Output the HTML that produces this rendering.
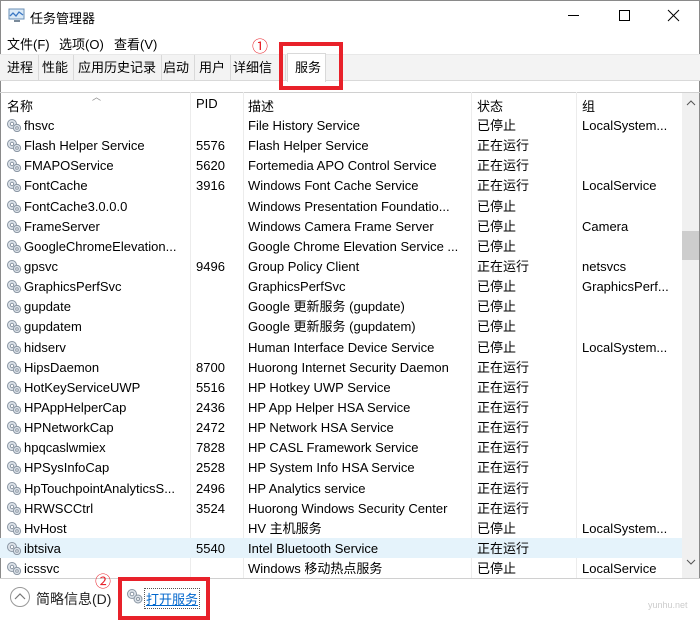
<!DOCTYPE html>
<html><head><meta charset="utf-8"><style>
*{margin:0;padding:0;box-sizing:border-box}
body{width:700px;height:623px;overflow:hidden;background:#fff;font-family:"Liberation Sans","Noto Sans CJK SC",sans-serif;font-size:13px;color:#000;position:relative}
.a{position:absolute;white-space:nowrap}
.tab{position:absolute;top:55px;height:26px;line-height:26px;font-size:13px;border-right:1px solid #d9d9d9;padding:0 5px;color:#000}
.row{position:absolute;left:0;width:682px;height:20px;line-height:20px}
.row span{position:absolute;top:1px}
.ic{position:absolute;left:6px;top:3px;width:16px;height:14px}
.vl{position:absolute;top:92px;height:486px;width:1px;background:#ececec}
</style></head><body>
<div class="a" style="left:0;top:0;width:700px;height:623px;border:1px solid #8a8a8a;border-bottom:none"></div>
<svg class="a" style="left:8px;top:8px" width="18" height="16" viewBox="0 0 18 16"><rect x="1" y="1" width="15" height="10" fill="#dbeaf7" stroke="#6a8fb5"/><polyline points="2,8 5,5 8,8 11,4 15,7" fill="none" stroke="#3b78c4" stroke-width="1.3"/><rect x="6" y="12" width="6" height="2" fill="#7a8a9a"/></svg>
<div class="a" style="left:30px;top:8px;font-size:13px">任务管理器</div>
<div class="a" style="left:568px;top:15px;width:11px;height:1px;background:#000"></div>
<div class="a" style="left:619px;top:10px;width:11px;height:11px;border:1px solid #000"></div>
<svg class="a" style="left:667px;top:9px" width="13" height="13"><path d="M1 1L12 12M12 1L1 12" stroke="#000" stroke-width="1"/></svg>
<div class="a" style="left:7px;top:34px">文件(F)</div>
<div class="a" style="left:59px;top:34px">选项(O)</div>
<div class="a" style="left:114px;top:34px">查看(V)</div>
<div class="a" style="left:0;top:54px;width:700px;height:27px;background:#f3f3f3;border-top:1px solid #e8e8e8;border-bottom:1px solid #d9d9d9"></div>
<div class="tab" style="left:2px">进程</div>
<div class="tab" style="left:37px">性能</div>
<div class="tab" style="left:73px">应用历史记录</div>
<div class="tab" style="left:158px">启动</div>
<div class="tab" style="left:194px">用户</div>
<div class="tab" style="left:228px;width:58px;overflow:hidden">详细信息</div>
<div class="a" style="left:287px;top:53px;width:39px;height:29px;background:#fff;border:1px solid #d9d9d9;border-bottom:none;line-height:28px;padding-left:7px">服务</div>
<div class="a" style="left:0;top:92px;width:700px;height:1px;background:#d0d0d0"></div>
<div class="a" style="left:92px;top:90px;font-size:9px;color:#888">︿</div>
<div class="a" style="left:7px;top:96px">名称</div>
<div class="a" style="left:196px;top:96px">PID</div>
<div class="a" style="left:248px;top:96px">描述</div>
<div class="a" style="left:477px;top:96px">状态</div>
<div class="a" style="left:582px;top:96px">组</div>
<div class="vl" style="left:190px"></div><div class="vl" style="left:243px"></div><div class="vl" style="left:471px"></div><div class="vl" style="left:576px"></div>
<div class="a" style="left:0;top:538px;width:682px;height:20px;background:#e5f3fb"></div>
<div id="rows"></div>
<div class="a" style="left:682px;top:93px;width:17px;height:485px;background:#f0f0f0"></div>
<svg class="a" style="left:686px;top:100px" width="10" height="6"><path d="M1 5L5 1L9 5" fill="none" stroke="#555"/></svg>
<div class="a" style="left:682px;top:231px;width:17px;height:29px;background:#cdcdcd"></div>
<svg class="a" style="left:686px;top:559px" width="10" height="6"><path d="M1 1L5 5L9 1" fill="none" stroke="#555"/></svg>
<div class="a" style="left:0;top:578px;width:700px;height:45px;background:#fff;border-top:1px solid #d0d0d0"></div>
<div class="a" style="left:10px;top:587px;width:20px;height:20px;border:1px solid #999;border-radius:50%"></div>
<svg class="a" style="left:14px;top:593px" width="12" height="8"><path d="M1 6L6 1L11 6" fill="none" stroke="#777" stroke-width="1.2"/></svg>
<div class="a" style="left:36px;top:589px;font-size:14px;color:#222">简略信息(D)</div>
<svg class="a" style="left:126px;top:588px" width="18" height="16"><circle cx="6" cy="6" r="4.5" fill="#dde3ea" stroke="#8a96a3"/><circle cx="6" cy="6" r="1.8" fill="#fff" stroke="#8a96a3"/><circle cx="12" cy="11" r="4" fill="#dde3ea" stroke="#8a96a3"/><circle cx="12" cy="11" r="1.5" fill="#fff" stroke="#8a96a3"/></svg>
<div class="a" style="left:144px;top:588px;font-size:13px;color:#0066cc;text-decoration:underline;border:1px dotted #555;padding:0 1px">打开服务</div>
<div class="a" style="left:279px;top:42px;width:64px;height:48px;border:4px solid #e8212a"></div>
<div class="a" style="left:118px;top:577px;width:92px;height:43px;border:4px solid #e8212a"></div>
<div class="a" style="left:252px;top:33px;color:#e8212a;font-size:16px">①</div>
<div class="a" style="left:95px;top:568px;color:#e8212a;font-size:16px">②</div>
<div class="a" style="left:648px;top:600px;color:#ccc;font-size:9px">yunhu.net</div>
<script>
var d=[["fhsvc","","File History Service","已停止","LocalSystem..."],
["Flash Helper Service","5576","Flash Helper Service","正在运行",""],
["FMAPOService","5620","Fortemedia APO Control Service","正在运行",""],
["FontCache","3916","Windows Font Cache Service","正在运行","LocalService"],
["FontCache3.0.0.0","","Windows Presentation Foundatio...","已停止",""],
["FrameServer","","Windows Camera Frame Server","已停止","Camera"],
["GoogleChromeElevation...","","Google Chrome Elevation Service ...","已停止",""],
["gpsvc","9496","Group Policy Client","正在运行","netsvcs"],
["GraphicsPerfSvc","","GraphicsPerfSvc","已停止","GraphicsPerf..."],
["gupdate","","Google 更新服务 (gupdate)","已停止",""],
["gupdatem","","Google 更新服务 (gupdatem)","已停止",""],
["hidserv","","Human Interface Device Service","已停止","LocalSystem..."],
["HipsDaemon","8700","Huorong Internet Security Daemon","正在运行",""],
["HotKeyServiceUWP","5516","HP Hotkey UWP Service","正在运行",""],
["HPAppHelperCap","2436","HP App Helper HSA Service","正在运行",""],
["HPNetworkCap","2472","HP Network HSA Service","正在运行",""],
["hpqcaslwmiex","7828","HP CASL Framework Service","正在运行",""],
["HPSysInfoCap","2528","HP System Info HSA Service","正在运行",""],
["HpTouchpointAnalyticsS...","2496","HP Analytics service","正在运行",""],
["HRWSCCtrl","3524","Huorong Windows Security Center","正在运行",""],
["HvHost","","HV 主机服务","已停止","LocalSystem..."],
["ibtsiva","5540","Intel Bluetooth Service","正在运行",""],
["icssvc","","Windows 移动热点服务","已停止","LocalService"]];
var ico='<svg class="ic" viewBox="0 0 16 14"><circle cx="6" cy="6" r="4.5" fill="#dde3ea" stroke="#8a96a3"/><circle cx="6" cy="6" r="1.7" fill="#fff" stroke="#8a96a3"/><circle cx="11" cy="10" r="3.6" fill="#dde3ea" stroke="#8a96a3"/><circle cx="11" cy="10" r="1.3" fill="#fff" stroke="#8a96a3"/></svg>';
var h='';d.forEach(function(r,i){var t=Math.round(115+i*20.14);
h+='<div class="row" style="top:'+t+'px">'+ico+'<span style="left:24px">'+r[0]+'</span><span style="left:196px">'+r[1]+'</span><span style="left:248px">'+r[2]+'</span><span style="left:477px">'+r[3]+'</span><span style="left:582px">'+r[4]+'</span></div>';});
document.getElementById('rows').innerHTML=h;
</script>
</body></html>
